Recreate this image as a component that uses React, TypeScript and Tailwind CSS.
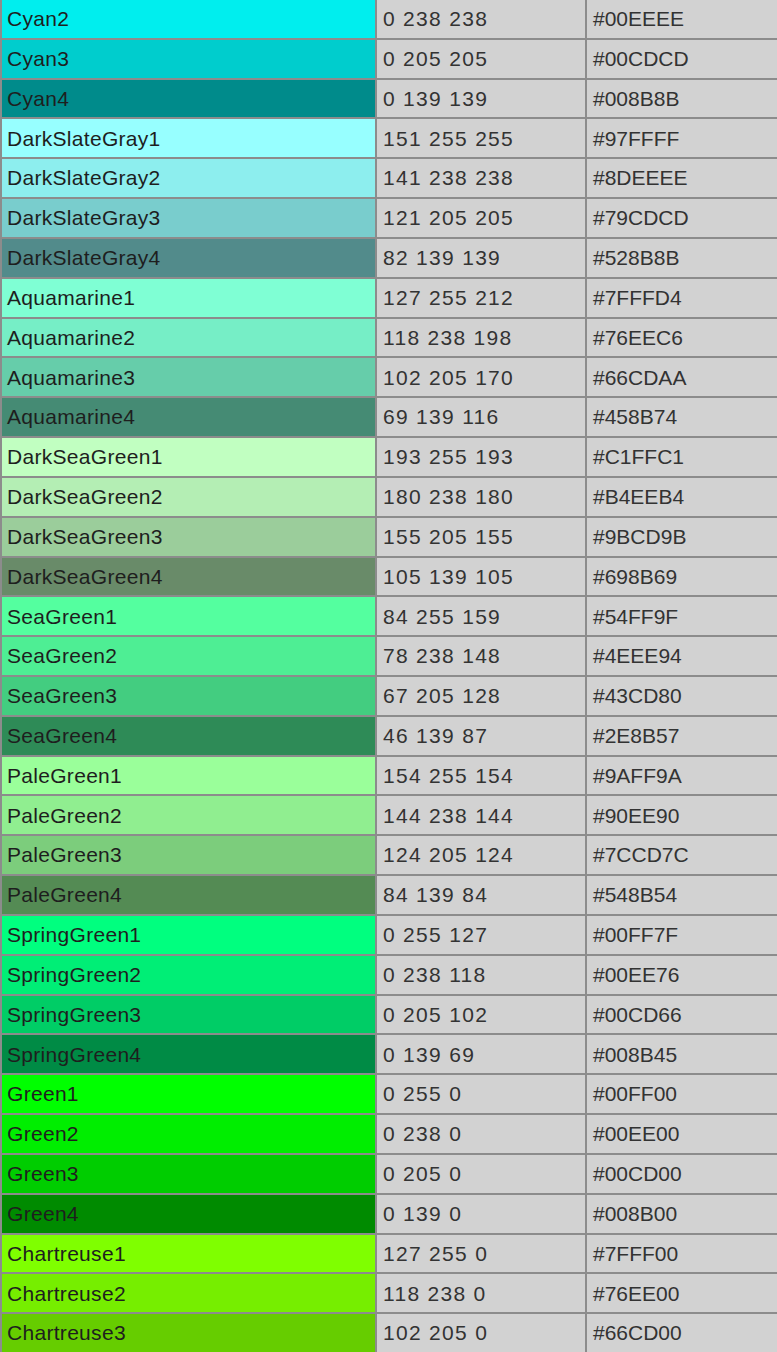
const rows: [string, string, string, string][] = [
  ["Cyan2", "0 238 238", "#00EEEE", "bg-[#00EEEE]"],
  ["Cyan3", "0 205 205", "#00CDCD", "bg-[#00CDCD]"],
  ["Cyan4", "0 139 139", "#008B8B", "bg-[#008B8B]"],
  ["DarkSlateGray1", "151 255 255", "#97FFFF", "bg-[#97FFFF]"],
  ["DarkSlateGray2", "141 238 238", "#8DEEEE", "bg-[#8DEEEE]"],
  ["DarkSlateGray3", "121 205 205", "#79CDCD", "bg-[#79CDCD]"],
  ["DarkSlateGray4", "82 139 139", "#528B8B", "bg-[#528B8B]"],
  ["Aquamarine1", "127 255 212", "#7FFFD4", "bg-[#7FFFD4]"],
  ["Aquamarine2", "118 238 198", "#76EEC6", "bg-[#76EEC6]"],
  ["Aquamarine3", "102 205 170", "#66CDAA", "bg-[#66CDAA]"],
  ["Aquamarine4", "69 139 116", "#458B74", "bg-[#458B74]"],
  ["DarkSeaGreen1", "193 255 193", "#C1FFC1", "bg-[#C1FFC1]"],
  ["DarkSeaGreen2", "180 238 180", "#B4EEB4", "bg-[#B4EEB4]"],
  ["DarkSeaGreen3", "155 205 155", "#9BCD9B", "bg-[#9BCD9B]"],
  ["DarkSeaGreen4", "105 139 105", "#698B69", "bg-[#698B69]"],
  ["SeaGreen1", "84 255 159", "#54FF9F", "bg-[#54FF9F]"],
  ["SeaGreen2", "78 238 148", "#4EEE94", "bg-[#4EEE94]"],
  ["SeaGreen3", "67 205 128", "#43CD80", "bg-[#43CD80]"],
  ["SeaGreen4", "46 139 87", "#2E8B57", "bg-[#2E8B57]"],
  ["PaleGreen1", "154 255 154", "#9AFF9A", "bg-[#9AFF9A]"],
  ["PaleGreen2", "144 238 144", "#90EE90", "bg-[#90EE90]"],
  ["PaleGreen3", "124 205 124", "#7CCD7C", "bg-[#7CCD7C]"],
  ["PaleGreen4", "84 139 84", "#548B54", "bg-[#548B54]"],
  ["SpringGreen1", "0 255 127", "#00FF7F", "bg-[#00FF7F]"],
  ["SpringGreen2", "0 238 118", "#00EE76", "bg-[#00EE76]"],
  ["SpringGreen3", "0 205 102", "#00CD66", "bg-[#00CD66]"],
  ["SpringGreen4", "0 139 69", "#008B45", "bg-[#008B45]"],
  ["Green1", "0 255 0", "#00FF00", "bg-[#00FF00]"],
  ["Green2", "0 238 0", "#00EE00", "bg-[#00EE00]"],
  ["Green3", "0 205 0", "#00CD00", "bg-[#00CD00]"],
  ["Green4", "0 139 0", "#008B00", "bg-[#008B00]"],
  ["Chartreuse1", "127 255 0", "#7FFF00", "bg-[#7FFF00]"],
  ["Chartreuse2", "118 238 0", "#76EE00", "bg-[#76EE00]"],
  ["Chartreuse3", "102 205 0", "#66CD00", "bg-[#66CD00]"],
];

export default function App() {
  return (
    <div
      className="grid h-[1352px] w-[777px] grid-cols-[373px_208px_1fr] grid-rows-[repeat(34,1fr)] gap-[2px] bg-[#8c8c8c] pl-[2px] text-[21px] text-[#1e1e1e]"
      style={{ fontFamily: '"Liberation Sans", Arial, sans-serif' }}
    >
      {rows.map(([name, rgb, hex, bg]) => (
        <div key={name} className="contents">
          <div className={`flex items-center pl-[5px] tracking-[0.3px] ${bg}`}>{name}</div>
          <div className="flex items-center bg-[#d2d2d2] pl-[6px] tracking-[1.3px] text-[#333]">{rgb}</div>
          <div className="flex items-center bg-[#d2d2d2] pl-[6px] text-[#333]">{hex}</div>
        </div>
      ))}
    </div>
  );
}
